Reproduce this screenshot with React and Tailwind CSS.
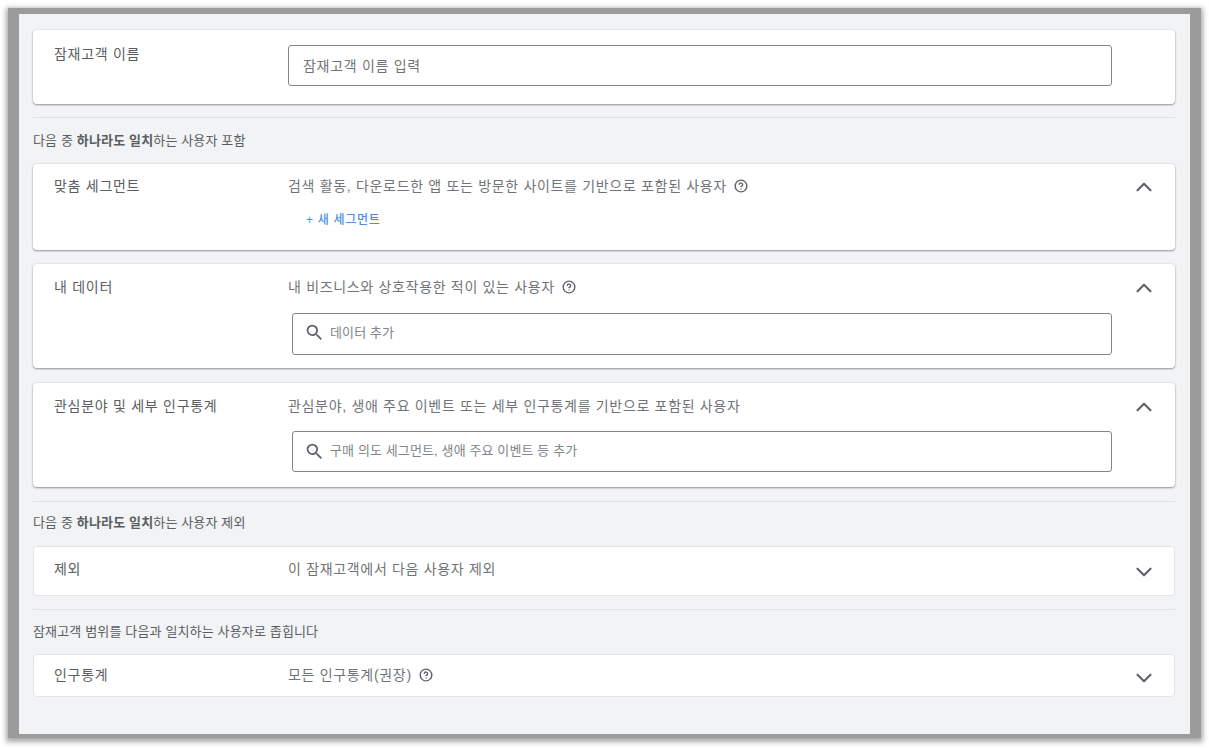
import React from 'react';
import { ChevronDown, ChevronUp, HelpCircle } from 'lucide-react';

const FONT = "font-['Liberation_Sans','Noto_Sans_CJK_KR',sans-serif]";

const SearchIcon = () => (
  <svg viewBox="0 0 24 24" className="-ml-[2px] h-[21px] w-[21px] shrink-0 fill-[#5f6368]">
    <path d="M15.5 14h-.79l-.28-.27A6.471 6.471 0 0 0 16 9.5 6.5 6.5 0 1 0 9.5 16c1.61 0 3.09-.59 4.23-1.57l.27.28v.79l5 4.99L20.49 19l-4.99-5zm-6 0C7.01 14 5 11.99 5 9.5S7.01 5 9.5 5 14 7.01 14 9.5 11.99 14 9.5 14z" />
  </svg>
);

const Card = ({ label, chevron, className = '', children }) => {
  const Chevron = chevron === 'up' ? ChevronUp : ChevronDown;
  return (
    <div className={`flex rounded-[4px] bg-white pl-[21px] ${className}`}>
      <div className="w-[234px] shrink-0 text-[14px] leading-5 tracking-[0.72px] text-[#5a5e62]">{label}</div>
      <div className="w-[824px] shrink-0">{children}</div>
      {chevron && (
        <div className={`ml-[24px] flex h-5 w-4 shrink-0 items-center justify-center ${chevron === 'up' ? 'mt-[1px]' : 'mt-[3px]'}`}>
          <Chevron className="h-[26px] w-[26px] shrink-0 text-[#5f6368]" strokeWidth={2} />
        </div>
      )}
    </div>
  );
};

const Description = ({ children, help }) => (
  <div className="flex h-5 items-center text-[14px] tracking-[0.68px] text-[#707478]">
    <span>{children}</span>
    {help && <HelpCircle className="ml-[7px] h-[14px] w-[14px] shrink-0 text-[#5f6368]" strokeWidth={2.4} />}
  </div>
);

const SearchBox = ({ placeholder, className = '' }) => (
  <div className={`ml-1 flex items-center rounded-[3px] border border-[#80868b] bg-white pl-[13px] ${className}`}>
    <SearchIcon />
    <span className="ml-[5px] text-[13px] tracking-[0.12px] text-[#80868b]">{placeholder}</span>
  </div>
);

const SectionHead = ({ children, className = '' }) => (
  <div className={`border-t border-[#dfe1e5] text-[13px] leading-[18px] tracking-[0.15px] text-[#5a5e62] ${className}`}>
    {children}
  </div>
);

const shadowCard = 'shadow-[0_1px_2px_rgba(60,64,67,0.5),0_0_2px_rgba(60,64,67,0.15)]';
const flatCard = 'shadow-[inset_0_0_0_1px_#e3e5e8]';

export default function App() {
  return (
    <div className={`h-[748px] w-[1209px] overflow-hidden bg-white pl-2 pr-2 pt-2 ${FONT}`}>
      <div className="h-[730px] w-[1193px] border-b-[4px] border-l-[11px] border-r-[11px] border-t-[6px] border-[#9b9b9b] bg-[#f1f3f4] shadow-[0_2px_5px_2px_rgba(140,140,140,0.75)]">
        <div className="flex flex-col pl-[14px] pr-[15px] pt-4">
          <Card label="잠재고객 이름" className={`h-[74px] pt-[14px] ${shadowCard}`}>
            <div className="mt-[1px] flex h-[41px] items-center rounded-[3px] border border-[#80868b] bg-white pl-[14px] pt-[2px] text-[14px] tracking-[0.7px] text-[#707478]">
              잠재고객 이름 입력
            </div>
          </Card>

          <SectionHead className="mt-[13px] h-[47px] pt-[14px]">
            다음 중 <b className="font-bold">하나라도 일치</b>하는 사용자 포함
          </SectionHead>

          <Card label="맞춤 세그먼트" chevron="up" className={`h-[86px] pt-[12px] ${shadowCard}`}>
            <Description help>검색 활동, 다운로드한 앱 또는 방문한 사이트를 기반으로 포함된 사용자</Description>
            <div className="ml-[18px] mt-[14px] text-[12px] font-medium leading-[20px] tracking-[0.7px] text-[#4a8fe8]">+ 새 세그먼트</div>
          </Card>

          <Card label="내 데이터" chevron="up" className={`mt-[14px] h-[104px] pt-[13px] ${shadowCard}`}>
            <Description help>내 비즈니스와 상호작용한 적이 있는 사용자</Description>
            <SearchBox className="mt-4 h-[42px] pb-[3px]" placeholder="데이터 추가" />
          </Card>

          <Card label="관심분야 및 세부 인구통계" chevron="up" className={`mt-[15px] h-[104px] pt-[13px] ${shadowCard}`}>
            <Description>관심분야, 생애 주요 이벤트 또는 세부 인구통계를 기반으로 포함된 사용자</Description>
            <SearchBox className="mt-[15px] h-[41px] pb-[1px]" placeholder="구매 의도 세그먼트, 생애 주요 이벤트 등 추가" />
          </Card>

          <SectionHead className="mt-[14px] h-[45px] pt-[12px]">
            다음 중 <b className="font-bold">하나라도 일치</b>하는 사용자 제외
          </SectionHead>

          <Card label="제외" chevron="down" className={`h-[50px] pt-[13px] ${flatCard}`}>
            <Description>이 잠재고객에서 다음 사용자 제외</Description>
          </Card>

          <SectionHead className="mt-[13px] h-[45px] pt-[13px]">잠재고객 범위를 다음과 일치하는 사용자로 좁힙니다</SectionHead>

          <Card label="인구통계" chevron="down" className={`h-[43px] pt-[11px] ${flatCard}`}>
            <Description help>모든 인구통계(권장)</Description>
          </Card>
        </div>
      </div>
    </div>
  );
}
